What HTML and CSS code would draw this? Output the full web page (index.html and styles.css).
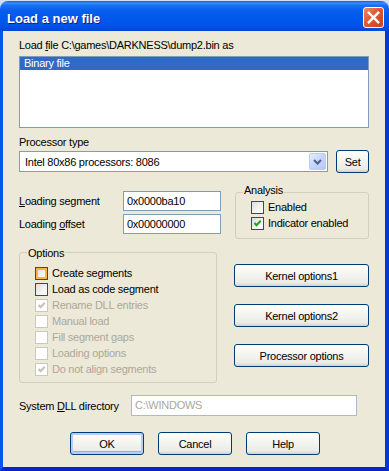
FILE: index.html
```html
<!DOCTYPE html>
<html>
<head>
<meta charset="utf-8">
<link rel="stylesheet" href="styles.css">
</head>
<body>
<div class="window">
  <div class="titlebar">
    <span class="title">Load a new file</span>
    <span class="close"><svg width="13" height="13" viewBox="0 0 13 13"><path d="M1.8 1.8 L11.2 11.2 M11.2 1.8 L1.8 11.2" stroke="#fff" stroke-width="2.4" stroke-linecap="square" fill="none"/></svg></span>
  </div>
  <div class="frame">
    <div class="client">
      <div class="lbl lbl-file">Load <u>f</u>ile C:\games\DARKNESS\dump2.bin as</div>
      <div class="listbox"><div class="item sel">Binary file</div></div>
      <div class="lbl lbl-proc">Processor type</div>
      <div class="proc-row">
        <div class="combo">
          <span class="combo-text">Intel 80x86 processors: 8086</span>
          <span class="combo-btn"><svg width="9" height="6" viewBox="0 0 9 6"><path d="M1 1 L4.5 4.5 L8 1" stroke="#4D6185" stroke-width="2" fill="none"/></svg></span>
        </div>
        <button class="btn btn-set">Set</button>
      </div>
      <div class="mid-row">
        <div class="seg-fields">
          <div class="field"><span class="field-lbl"><u>L</u>oading segment</span><span class="edit">0x0000ba10</span></div>
          <div class="field"><span class="field-lbl">Loading <u>o</u>ffset</span><span class="edit">0x00000000</span></div>
        </div>
        <div class="group analysis">
          <span class="group-title">Analysis</span>
          <div class="check"><span class="cb"></span>Enabled</div>
          <div class="check"><span class="cb"><svg width="11" height="11" viewBox="0 0 11 11"><path d="M2.5 5 L4.5 7.2 L8.7 2.8" stroke="#21A121" stroke-width="2" fill="none"/></svg></span>Indicator enabled</div>
        </div>
      </div>
      <div class="opt-row">
        <div class="group options">
          <span class="group-title">Options</span>
          <div class="check"><span class="cb hover"></span>Create segments</div>
          <div class="check"><span class="cb"></span>Load as code segment</div>
          <div class="check dis"><span class="cb"><svg width="11" height="11" viewBox="0 0 11 11"><path d="M2.5 5 L4.5 7.2 L8.7 2.8" stroke="#C6C3B6" stroke-width="2" fill="none"/></svg></span>Rename DLL entries</div>
          <div class="check dis"><span class="cb"></span>Manual load</div>
          <div class="check dis"><span class="cb"></span>Fill segment gaps</div>
          <div class="check dis"><span class="cb"></span>Loading options</div>
          <div class="check dis"><span class="cb"><svg width="11" height="11" viewBox="0 0 11 11"><path d="M2.5 5 L4.5 7.2 L8.7 2.8" stroke="#C6C3B6" stroke-width="2" fill="none"/></svg></span>Do not align segments</div>
        </div>
        <div class="opt-buttons">
          <button class="btn btn-wide">Kernel options1</button>
          <button class="btn btn-wide">Kernel options2</button>
          <button class="btn btn-wide">Processor options</button>
        </div>
      </div>
      <div class="dll-row">
        <span class="dll-lbl">System <u>D</u>LL directory</span>
        <span class="edit edit-dis">C:\WINDOWS</span>
      </div>
      <div class="footer">
        <button class="btn btn-foot btn-default">OK</button>
        <button class="btn btn-foot">Cancel</button>
        <button class="btn btn-foot">Help</button>
      </div>
    </div>
  </div>
</div>
</body>
</html>
```
FILE: styles.css
```css
html, body {
  margin: 0;
  padding: 0;
}
body {
  padding-top: 1px;
  background: #D6DEF2;
  font-family: "Liberation Sans", Arial, sans-serif;
  font-size: 11px;
  color: #000;
}
.window {
  width: 389px;
}
.titlebar {
  height: 30px;
  box-sizing: border-box;
  border-radius: 8px 8px 0 0;
  background: linear-gradient(to bottom, #0B5DE6 0%, #3D8DFB 7%, #1A6FF5 14%, #0860EE 30%, #0058EC 55%, #0055E8 80%, #0048D8 100%);
  display: flex;
  justify-content: space-between;
  align-items: flex-start;
  padding: 0 5px 0 7px;
}
.title {
  color: #fff;
  font-weight: bold;
  font-size: 13px;
  line-height: 16px;
  margin-top: 10px;
  text-shadow: 1px 1px 0 #0A1F8F;
}
.close {
  width: 21px;
  height: 21px;
  margin-top: 6px;
  box-sizing: border-box;
  border: 1px solid #fff;
  border-radius: 3px;
  background: linear-gradient(135deg, #EE8A68 0%, #E2572E 45%, #C9431C 100%);
  display: flex;
  align-items: center;
  justify-content: center;
}
.frame {
  border-left: 3px solid #0A55EC;
  border-right: 4px solid #0637D8;
  border-bottom: 4px solid #0325CB;
}
.client {
  background: #ECE9D8;
  height: 436px;
  box-sizing: border-box;
  padding: 0 16px 0 16px;
  letter-spacing: -0.25px;
}
.lbl {
  line-height: 13px;
  height: 13px;
  white-space: nowrap;
}
.lbl-file {
  padding-top: 8px;
}
.listbox {
  margin-top: 4px;
  width: 350px;
  height: 72px;
  box-sizing: border-box;
  border: 1px solid #7F9DB9;
  background: #fff;
}
.item {
  height: 13px;
  line-height: 13px;
  padding-left: 4px;
}
.item.sel {
  background: #316AC5;
  color: #fff;
}
.lbl-proc {
  margin-top: 8px;
}
.proc-row {
  margin-top: 1px;
  display: flex;
  align-items: flex-end;
}
.combo {
  width: 312px;
  height: 21px;
  box-sizing: border-box;
  border: 1px solid #7F9DB9;
  background: #fff;
  display: flex;
  align-items: center;
  justify-content: space-between;
  padding: 1px;
}
.combo-text {
  padding-left: 4px;
}
.combo-btn {
  width: 17px;
  height: 17px;
  box-sizing: border-box;
  border: 1px solid #BCCCF3;
  border-radius: 2px;
  background: linear-gradient(135deg, #E6EEFD 0%, #C6D6FB 50%, #B5C9F7 100%);
  display: flex;
  align-items: center;
  justify-content: center;
}
.btn {
  height: 23px;
  box-sizing: border-box;
  border: 1px solid #003C74;
  border-radius: 3px;
  background: linear-gradient(to bottom, #FFFFFF 0%, #F6F6F3 35%, #ECEBE6 85%, #D6D0C5 100%);
  font-family: inherit;
  font-size: 11px;
  letter-spacing: -0.25px;
  color: #000;
  padding: 0;
  margin: 0;
}
.btn-set {
  width: 33px;
  margin-left: 8px;
  margin-bottom: -1px;
}
.mid-row {
  margin-top: 19px;
  display: flex;
  align-items: flex-start;
}
.seg-fields {
  width: 202px;
  display: flex;
  flex-direction: column;
  gap: 3px;
}
.field {
  display: flex;
  align-items: center;
}
.field-lbl {
  width: 104px;
  white-space: nowrap;
}
.edit {
  display: block;
  width: 98px;
  height: 20px;
  box-sizing: border-box;
  border: 1px solid #7F9DB9;
  background: #fff;
  padding-left: 3px;
  line-height: 18px;
  white-space: nowrap;
}
.group {
  border: 1px solid #D0D0BF;
  border-radius: 3px;
  box-sizing: border-box;
  display: flex;
  flex-direction: column;
}
.group-title {
  align-self: flex-start;
  background: #ECE9D8;
  padding: 0 1px;
  line-height: 13px;
  height: 13px;
}
.analysis {
  margin-top: 1px;
  margin-left: 14px;
  width: 138px;
  height: 47px;
}
.analysis .group-title {
  margin: -9px 0 0 7px;
}
.analysis .check:first-of-type {
  margin-top: 2px;
}
.check {
  display: flex;
  align-items: center;
  height: 16px;
  padding-left: 15px;
  white-space: nowrap;
}
.cb {
  width: 13px;
  height: 13px;
  box-sizing: border-box;
  border: 1px solid #1C5180;
  background: linear-gradient(135deg, #DCDCD7 0%, #F4F4F2 60%, #FFFFFF 100%);
  margin-right: 4px;
  flex: none;
  display: flex;
  align-items: center;
  justify-content: center;
}
.cb.hover {
  box-shadow: inset 0 0 0 2px #F8B53C;
}
.check.dis {
  color: #ACA899;
}
.check.dis .cb {
  border-color: #CAC8BB;
  background: #fff;
}
.opt-row {
  margin-top: 13px;
  display: flex;
  align-items: flex-start;
}
.options {
  width: 201px;
  height: 131px;
}
.options .group-title {
  margin: -6px 0 0 7px;
}
.options .check:first-of-type {
  margin-top: 5px;
}
.opt-buttons {
  margin-top: 12px;
  margin-left: 17px;
  display: flex;
  flex-direction: column;
  gap: 17px;
}
.btn-wide {
  width: 135px;
}
.dll-row {
  margin-top: 12px;
  display: flex;
  align-items: center;
}
.dll-lbl {
  width: 112px;
  white-space: nowrap;
}
.edit.edit-dis {
  width: 226px;
  height: 21px;
  line-height: 19px;
  border-color: #AEB9C7;
  color: #ACA899;
}
.footer {
  margin-top: 16px;
  padding-left: 51px;
  display: flex;
  gap: 14px;
}
.btn-foot {
  width: 74px;
}
.btn-default {
  box-shadow: inset 0 0 0 2px #B6CEF4, inset 0 -1px 0 2px #8FAFE8;
}
```
